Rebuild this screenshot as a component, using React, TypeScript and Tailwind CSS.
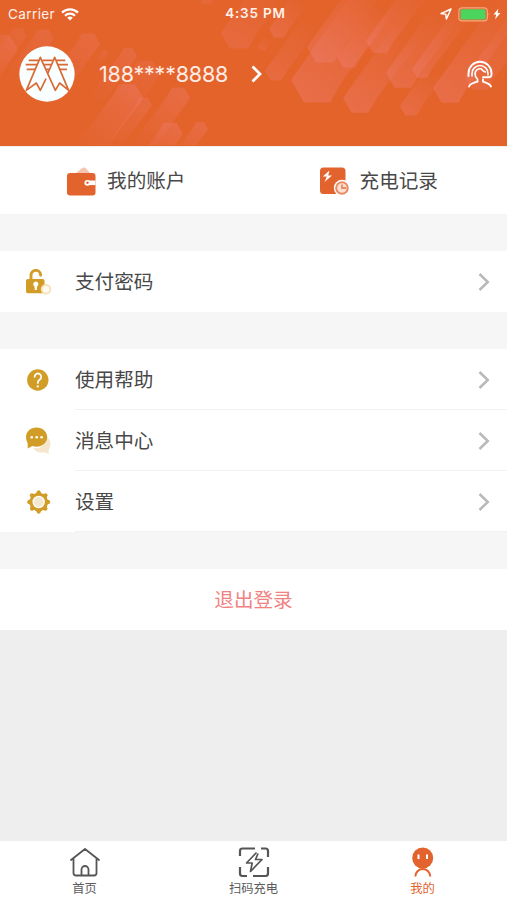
import type { ReactNode } from "react";

type Beam = { x: number; y: number; r: number; len: number; o: number; down?: boolean };

// x/y is the centre of the hexagonal head, len how far the tail runs
const beams: Beam[] = [
  { x: 317, y: 80, r: 26, len: 75, o: 0.17 },
  { x: 325, y: 47, r: 18, len: 70, o: 0.15 },
  { x: 349, y: 57, r: 12, len: 50, o: 0.15 },
  { x: 380, y: 41, r: 14, len: 60, o: 0.15 },
  { x: 360, y: 98, r: 17, len: 70, o: 0.17 },
  { x: 403, y: 73, r: 17, len: 60, o: 0.15 },
  { x: 422, y: 69, r: 10, len: 75, o: 0.14 },
  { x: 450, y: 88, r: 17, len: 95, o: 0.16 },
  { x: 411, y: 106, r: 11, len: 32, o: 0.15 },
  { x: 480, y: 77, r: 15, len: 80, o: 0.11 },
  { x: 276, y: 71, r: 11, len: 55, o: 0.12 },
  { x: 279, y: 29, r: 10, len: 30, o: 0.14 },
  { x: 263, y: 46, r: 5, len: 6, o: 0.1 },
  { x: 239, y: 33, r: 18, len: 35, o: 0.12 },
  { x: 207, y: -4, r: 9, len: 10, o: 0.1 },
  { x: 88, y: 44, r: 12, len: 50, o: 0.12, down: true },
  { x: 128, y: 56, r: 9, len: 50, o: 0.12, down: true },
  { x: 145, y: 74, r: 15, len: 25, o: 0.09, down: true },
  { x: 127, y: 98, r: 16, len: 60, o: 0.14, down: true },
  { x: 178, y: 98, r: 12, len: 55, o: 0.14, down: true },
  { x: 144, y: 105, r: 8, len: 50, o: 0.12, down: true },
  { x: 170, y: 134, r: 13, len: 30, o: 0.15, down: true },
  { x: 200, y: 129, r: 8, len: 35, o: 0.14, down: true },
  { x: 43, y: 39, r: 11, len: 45, o: 0.1, down: true },
  { x: 18, y: 36, r: 9, len: 40, o: 0.08, down: true },
  { x: 0, y: 50, r: 18, len: 30, o: 0.1, down: true },
  { x: 104, y: 54, r: 4, len: 8, o: 0.1, down: true },
];

function HeaderPattern() {
  return (
    <svg className="absolute inset-0 blur-[0.6px]" width="507" height="145" viewBox="0 0 507 145">
      <defs>
        <linearGradient id="beam" gradientUnits="objectBoundingBox" x1="0.15" y1="1" x2="0.85" y2="0">
          <stop offset="0" stopColor="#f690a4" />
          <stop offset="1" stopColor="#f690a4" stopOpacity="0" />
        </linearGradient>
      </defs>
      {beams.map(({ x, y, r, len, o, down }, i) => {
        const h = r * 0.866;
        const dx = len * 0.6;
        const dy = len * 0.8;
        return (
          <polygon
            key={i}
            fill="url(#beam)"
            opacity={o * 1.5}
            transform={`translate(${x} ${y}) rotate(${down ? 180 : 0})`}
            points={`${-r},0 ${-r / 2},${h} ${r / 2},${h} ${r},0 ${r + dx},${-dy} ${r / 2 + dx},${-h - dy} ${-r / 2 + dx},${-h - dy}`}
          />
        );
      })}
    </svg>
  );
}

function StatusBar() {
  return (
    <div className="relative grid h-7 grid-cols-3 items-center pr-1.5 pl-2 text-[13.5px] text-[#fff1ea]">
      <div className="flex items-center gap-1.5">
        <span className="pt-px tracking-[0.4px]">Carrier</span>
        <svg width="18" height="13" viewBox="0 0 18 13" fill="none" stroke="#fff" strokeWidth="2.3">
          <path d="M1 4.6a11.4 11.4 0 0 1 16 0" />
          <path d="M4 7.7a7.1 7.1 0 0 1 10 0" />
          <path d="M6.2 9.8a4 4 0 0 1 5.6 0L9 12.6Z" fill="#fff" stroke="none" />
        </svg>
      </div>
      <span className="pl-0.5 text-center text-[13.5px] font-semibold tracking-[0.8px]">4:35 PM</span>
      <div className="flex items-center justify-end">
        <svg className="mr-1.5" width="12" height="12" viewBox="0 0 12 12" fill="none" stroke="#fff" strokeWidth="1.5" strokeLinejoin="round">
          <path d="M11 1 1 5.6l4.800.6.6 4.800Z" />
        </svg>
        <svg width="33" height="15" viewBox="0 0 33 15">
          <rect x="0.9" y="0.9" width="28.500" height="13" rx="3.400" fill="none" stroke="#f7a880" strokeWidth="1.200" />
          <rect x="2.600" y="2.300" width="25" height="10.200" rx="1.600" fill="#4cd55e" />
          <path d="M30.800 5.300q1.600 2.200 0 4.400Z" fill="#f7a880" />
        </svg>
        <svg className="ml-0.5" width="8" height="12" viewBox="0 0 9 12" fill="#fff">
          <path d="M6 0 .6 6.600h3L2.400 12 8.400 5H5.200Z" />
        </svg>
      </div>
    </div>
  );
}

function Logo() {
  return (
    <svg width="56" height="56" viewBox="56 137 168 168">
      <circle cx="140" cy="221" r="83" fill="#f9fffe" />
      <g fill="none" stroke="#d96a36" strokeWidth="5" strokeLinejoin="round">
        <path d="M85 180h30M76 193h34M79 207h25M126 180h31M130 193h22M138 207h8M168 180h27M172 193h31M178 207h22" />
        <path d="M137 235 120 270l-12-22-30 22 42-99 45 99 13-22 27 22-42-99-20 47" />
      </g>
    </svg>
  );
}

function Chevron() {
  return (
    <svg width="12" height="20" viewBox="0 0 12 20" fill="none" stroke="#b9b9b9" strokeWidth="2.500">
      <path d="m1.500 2 8.300 8-8.300 8" />
    </svg>
  );
}

function Row({ icon, label, line }: { icon: ReactNode; label: string; line?: boolean }) {
  return (
    <div className="flex h-[61px] items-center bg-white">
      <div className="flex w-[75px] pl-6">{icon}</div>
      <div
        className={`flex h-full flex-1 items-center justify-between border-b pt-px pr-[17px] ${line ? "border-[#f1f1f1]" : "border-transparent"}`}
      >
        <span className="pt-[3px]">{label}</span>
        <Chevron />
      </div>
    </div>
  );
}

function WalletIcon() {
  return (
    <svg width="30" height="30" viewBox="0 0 30 30">
      <path d="m9 7 5.500-4.500q2.500-2 4.500 0L23 7Z" fill="#f6c5b0" />
      <rect y="7" width="28.500" height="22.500" rx="3" fill="#e2632d" />
      <path d="M20.300 14.500h8.200v4.600h-8.200Z" fill="#fff" />
      <circle cx="20.300" cy="16.800" r="2.900" fill="#fff" />
      <circle cx="20.500" cy="16.800" r="1.200" fill="#e2632d" />
    </svg>
  );
}

function RecordIcon() {
  return (
    <svg width="30" height="30" viewBox="0 0 30 30">
      <rect y="1.500" width="25.500" height="26.500" rx="3.500" fill="#e2632d" />
      <path d="M9.500 4.500 2.800 10.500h4L4.500 16l7.500-6.500H8.200Z" fill="#fff" />
      <circle cx="22" cy="22" r="8.200" fill="#fff" />
      <circle cx="22" cy="22" r="5.800" fill="#fbe0d3" stroke="#eb8a63" strokeWidth="2" />
      <path d="M22 18.500V22h4" fill="none" stroke="#eb8a63" strokeWidth="1.800" />
    </svg>
  );
}

function LockIcon() {
  return (
    <svg width="28" height="26" viewBox="0 0 28 26">
      <path d="M7 11V6.200a4.800 4.800 0 0 1 9.600 0" fill="none" stroke="#d19d27" strokeWidth="2.900" strokeLinecap="round" />
      <rect x="2" y="10" width="18.500" height="14.300" rx="2" fill="#d19d27" />
      <path d="M11.800 12.500a2.700 2.700 0 0 1 1.300 5L12.800 21h-2l-.3-3.500a2.700 2.700 0 0 1 1.300-5Z" fill="#fff" />
      <circle cx="22" cy="20.300" r="4.300" fill="#fffaf0" stroke="#f4e3b8" strokeWidth="1.800" />
    </svg>
  );
}

function HelpIcon() {
  return (
    <svg width="28" height="24" viewBox="0 0 28 24">
      <circle cx="13.800" cy="12" r="10.700" fill="#d19d27" />
      <path d="M10.600 8.800a3.300 3.300 0 1 1 5.200 2.700q-2 1.300-2 3.500" fill="none" stroke="#fff" strokeWidth="1.700" strokeLinecap="round" />
      <circle cx="13.800" cy="18.400" r="1.100" fill="#fff" />
    </svg>
  );
}

function MessageIcon() {
  return (
    <svg width="28" height="28" viewBox="0 0 28 28">
      <path d="M9 21q11 2 14.500-11 5 5.500 2 11l-.8 1.500V27l-4.500-1.800Q13 27 9 21Z" fill="#f4e7cd" />
      <path d="M12.500.4c6 0 10.700 4.200 10.700 9.700s-4.700 9.700-10.700 9.700q-2.200 0-4.200-.8l-4.600 2.400v-4.900Q2 13.700 2 10.100C2 4.600 6.500.4 12.500.4Z" fill="#d19d27" />
      <g fill="#fff">
        <circle cx="7.700" cy="10.200" r="1.300" />
        <circle cx="12.700" cy="10.200" r="1.300" />
        <circle cx="17.600" cy="10.200" r="1.300" />
      </g>
    </svg>
  );
}

function GearIcon() {
  return (
    <svg width="28" height="26" viewBox="0 0 28 26">
      <g fill="#d19d27">
        <circle cx="14.700" cy="13" r="9.200" />
        {[0, 45, 90, 135, 180, 225, 270, 315].map((a) => (
          <path key={a} d="M11.500 5.500 13.200 2q1.500-1.300 3 0l1.700 3.500Z" transform={`rotate(${a} 14.700 13)`} />
        ))}
      </g>
      <circle cx="14.700" cy="13" r="6.200" fill="#fff" />
      <circle cx="14.700" cy="13" r="4.900" fill="#f5e8d0" />
    </svg>
  );
}

function Tab({ icon, label, active }: { icon: ReactNode; label: string; active?: boolean }) {
  return (
    <div
      className={`flex flex-1 flex-col items-center pt-1 text-[12.3px] leading-[20px] ${active ? "text-[#e2632d]" : "text-[#5c5c5c]"}`}
    >
      {icon}
      <span>{label}</span>
    </div>
  );
}

export default function App() {
  return (
    <div className="flex h-[900px] w-[507px] flex-col overflow-hidden bg-[#eeeeee] font-['Inter','Noto_Sans_CJK_SC',sans-serif] text-[19.600px] leading-none text-[#484848]">
      <header className="relative h-[146px] shrink-0 bg-[#e4632b]">
        <HeaderPattern />
        <StatusBar />
        <div className="relative flex items-center pt-[18px] pr-[13px] pl-[19px]">
          <Logo />
          <span className="ml-6 w-[130px] pt-px text-[21.500px] tracking-[-0.200px] whitespace-nowrap text-[#ffece4]">
            188****8888
          </span>
          <svg className="ml-[22px]" width="12" height="18" viewBox="0 0 12 18" fill="none" stroke="#fff" strokeWidth="2.700">
            <path d="m1.500 1.500 7.500 7.500-7.500 7.500" />
          </svg>
          <svg className="ml-auto" width="28" height="30" viewBox="0 0 28 30" fill="none" stroke="#fff" strokeWidth="1.900" strokeLinecap="round">
            <path d="M2.500 17v-2.800a11.500 11.500 0 0 1 23 0v1.800q-.5 2.300-2.700 2.300H17" />
            <path d="M6 17v-2.500a8 8 0 0 1 16 0v1.500" strokeWidth="1.600" />
            <path d="M11.500 22.500v-2.300Q8.900 17.500 9 14.500a5 5 0 0 1 6.500-4.500q1.500 2.500 4 3" strokeWidth="1.600" />
            <path d="M3 27.500q1-2.500 4-3.300l4.500-1.700M17 20.500v2l4 1.700q3 1 4 3.300" />
          </svg>
        </div>
      </header>

      <div className="mt-px flex h-[67px] shrink-0 bg-white">
        <div className="flex flex-1 items-center justify-center gap-2.5">
          <WalletIcon />
          <span className="pt-0.5">我的账户</span>
        </div>
        <div className="flex flex-1 items-center justify-center gap-2.5 pr-0.5">
          <RecordIcon />
          <span className="pt-0.5">充电记录</span>
        </div>
      </div>

      <div className="shrink-0 bg-[#f6f6f6] pt-[37px]">
        <Row icon={<LockIcon />} label="支付密码" />
        <div className="pt-[37px]">
          <Row icon={<HelpIcon />} label="使用帮助" line />
          <Row icon={<MessageIcon />} label="消息中心" line />
          <Row icon={<GearIcon />} label="设置" line />
        </div>
        <button className="mt-[37px] flex h-[61px] w-full items-center justify-center bg-white pt-0.5 text-[#f08282]">
          退出登录
        </button>
      </div>

      <nav className="mt-auto flex h-[59px] shrink-0 bg-white">
        <Tab
          label="首页"
          icon={
            <svg width="32" height="34" viewBox="0 0 32 34" fill="none" stroke="#555" strokeWidth="1.800" strokeLinecap="round" strokeLinejoin="round">
              <path d="M2 15 16 4l14 11M4.500 13.500V28q0 2.500 2.500 2.500h18q2.500 0 2.500-2.500V13.500M12.500 30v-5.500a3.500 3.500 0 0 1 7 0V30" />
            </svg>
          }
        />
        <Tab
          label="扫码充电"
          icon={
            <svg width="32" height="34" viewBox="0 0 32 34" fill="none" stroke="#555" strokeWidth="2.200" strokeLinejoin="round">
              <path d="M2 11V6q0-2.500 2.500-2.500H17M23 3.500h4.500Q30 3.500 30 6v6M2 22v6.500Q2 31 4.500 31H9M15 31h12.500q2.500 0 2.500-2.500V22" />
              <path d="M18.500 7.500 8.500 18h5.700L12.500 26.500l11.500-12h-6.500L20 8.500" strokeWidth="1.700" />
            </svg>
          }
        />
        <Tab
          active
          label="我的"
          icon={
            <svg width="32" height="34" viewBox="0 0 32 34">
              <circle cx="15.700" cy="13" r="10.500" fill="#e2632d" />
              <path d="M11.500 9.500v4.500M20 9.500v4.500" stroke="#fff" strokeWidth="2" />
              <path d="M8.300 31.500a7.500 7.500 0 0 1 15 0" fill="none" stroke="#e2632d" strokeWidth="2" />
            </svg>
          }
        />
      </nav>
    </div>
  );
}
